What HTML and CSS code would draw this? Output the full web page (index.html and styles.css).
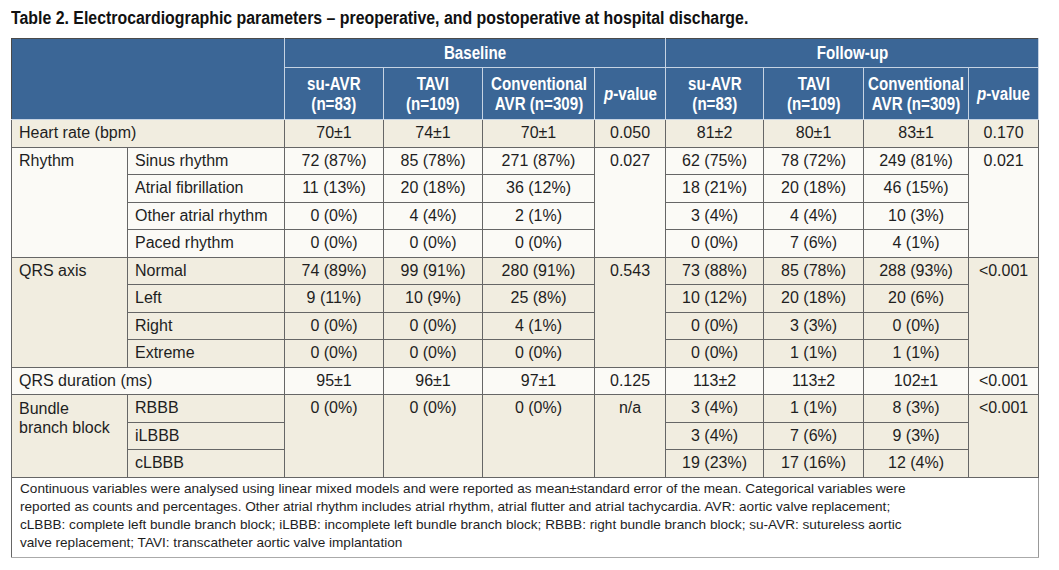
FILE: index.html
```html
<!DOCTYPE html>
<html lang="en">
<head>
<meta charset="utf-8">
<title>Table 2</title>
<link rel="stylesheet" href="styles.css">
</head>
<body>
<div class="page">
  <h1 class="title"><span class="title-text">Table 2. Electrocardiographic parameters – preoperative, and postoperative at hospital discharge.</span></h1>
  <table class="ecg">
    <colgroup>
      <col class="c-lab"><col class="c-sub">
      <col class="c-su"><col class="c-tavi"><col class="c-conv"><col class="c-p">
      <col class="c-su2"><col class="c-tavi2"><col class="c-conv2"><col class="c-p2">
    </colgroup>
    <thead>
      <tr class="h1">
        <th colspan="2" rowspan="2"></th>
        <th colspan="4"><div class="hc"><span class="sq">Baseline</span></div></th>
        <th colspan="4"><div class="hc"><span class="sq">Follow-up</span></div></th>
      </tr>
      <tr class="h2">
        <th><div class="hc"><span class="sq">su-AVR<br>(n=83)</span></div></th>
        <th><div class="hc"><span class="sq">TAVI<br>(n=109)</span></div></th>
        <th><div class="hc"><span class="sq">Conventional<br>AVR (n=309)</span></div></th>
        <th><div class="hc"><span class="sq"><i>p</i>-value</span></div></th>
        <th><div class="hc"><span class="sq">su-AVR<br>(n=83)</span></div></th>
        <th><div class="hc"><span class="sq">TAVI<br>(n=109)</span></div></th>
        <th><div class="hc"><span class="sq">Conventional<br>AVR (n=309)</span></div></th>
        <th><div class="hc"><span class="sq"><i>p</i>-value</span></div></th>
      </tr>
    </thead>
    <tbody class="beige">
      <tr>
        <td colspan="2" class="lab">Heart rate (bpm)</td>
        <td>70±1</td><td>74±1</td><td>70±1</td><td>0.050</td>
        <td>81±2</td><td>80±1</td><td>83±1</td><td>0.170</td>
      </tr>
    </tbody>
    <tbody class="white">
      <tr>
        <td rowspan="4" class="lab top">Rhythm</td>
        <td class="lab">Sinus rhythm</td>
        <td>72 (87%)</td><td>85 (78%)</td><td>271 (87%)</td><td rowspan="4" class="top">0.027</td>
        <td>62 (75%)</td><td>78 (72%)</td><td>249 (81%)</td><td rowspan="4" class="top">0.021</td>
      </tr>
      <tr>
        <td class="lab">Atrial fibrillation</td>
        <td>11 (13%)</td><td>20 (18%)</td><td>36 (12%)</td>
        <td>18 (21%)</td><td>20 (18%)</td><td>46 (15%)</td>
      </tr>
      <tr>
        <td class="lab">Other atrial rhythm</td>
        <td>0 (0%)</td><td>4 (4%)</td><td>2 (1%)</td>
        <td>3 (4%)</td><td>4 (4%)</td><td>10 (3%)</td>
      </tr>
      <tr>
        <td class="lab">Paced rhythm</td>
        <td>0 (0%)</td><td>0 (0%)</td><td>0 (0%)</td>
        <td>0 (0%)</td><td>7 (6%)</td><td>4 (1%)</td>
      </tr>
    </tbody>
    <tbody class="beige">
      <tr>
        <td rowspan="4" class="lab top">QRS axis</td>
        <td class="lab">Normal</td>
        <td>74 (89%)</td><td>99 (91%)</td><td>280 (91%)</td><td rowspan="4" class="top">0.543</td>
        <td>73 (88%)</td><td>85 (78%)</td><td>288 (93%)</td><td rowspan="4" class="top">&lt;0.001</td>
      </tr>
      <tr>
        <td class="lab">Left</td>
        <td>9 (11%)</td><td>10 (9%)</td><td>25 (8%)</td>
        <td>10 (12%)</td><td>20 (18%)</td><td>20 (6%)</td>
      </tr>
      <tr>
        <td class="lab">Right</td>
        <td>0 (0%)</td><td>0 (0%)</td><td>4 (1%)</td>
        <td>0 (0%)</td><td>3 (3%)</td><td>0 (0%)</td>
      </tr>
      <tr>
        <td class="lab">Extreme</td>
        <td>0 (0%)</td><td>0 (0%)</td><td>0 (0%)</td>
        <td>0 (0%)</td><td>1 (1%)</td><td>1 (1%)</td>
      </tr>
    </tbody>
    <tbody class="white">
      <tr>
        <td colspan="2" class="lab">QRS duration (ms)</td>
        <td>95±1</td><td>96±1</td><td>97±1</td><td>0.125</td>
        <td>113±2</td><td>113±2</td><td>102±1</td><td>&lt;0.001</td>
      </tr>
    </tbody>
    <tbody class="beige">
      <tr>
        <td rowspan="3" class="lab top wrap">Bundle<br>branch block</td>
        <td class="lab">RBBB</td>
        <td rowspan="3" class="top">0 (0%)</td><td rowspan="3" class="top">0 (0%)</td><td rowspan="3" class="top">0 (0%)</td><td rowspan="3" class="top">n/a</td>
        <td>3 (4%)</td><td>1 (1%)</td><td>8 (3%)</td><td rowspan="3" class="top">&lt;0.001</td>
      </tr>
      <tr>
        <td class="lab">iLBBB</td>
        <td>3 (4%)</td><td>7 (6%)</td><td>9 (3%)</td>
      </tr>
      <tr>
        <td class="lab">cLBBB</td>
        <td>19 (23%)</td><td>17 (16%)</td><td>12 (4%)</td>
      </tr>
    </tbody>
    <tfoot>
      <tr>
        <td colspan="10" class="note">Continuous variables were analysed using linear mixed models and were reported as mean±standard error of the mean. Categorical variables were<br>reported as counts and percentages. Other atrial rhythm includes atrial rhythm, atrial flutter and atrial tachycardia. AVR: aortic valve replacement;<br>cLBBB: complete left bundle branch block; iLBBB: incomplete left bundle branch block; RBBB: right bundle branch block; su-AVR: sutureless aortic<br>valve replacement; TAVI: transcatheter aortic valve implantation</td>
      </tr>
    </tfoot>
  </table>
</div>
</body>
</html>
```

FILE: styles.css
```css
html, body {
  margin: 0;
  padding: 0;
  background: #ffffff;
}

.page {
  padding: 7px 21px 0 11px;
  font-family: "Liberation Sans", Arial, sans-serif;
  color: #1e1e1e;
}

.title {
  margin: 0 0 8px 0;
  font-family: "Liberation Sans", Arial, sans-serif;
  font-weight: bold;
  font-size: 18px;
  line-height: 23px;
  color: #111;
  white-space: nowrap;
}

.title-text {
  display: inline-block;
  transform: scaleX(0.882);
  transform-origin: left center;
}

.ecg {
  width: 1027px;
  border-collapse: collapse;
  table-layout: fixed;
  font-size: 16px;
  border-left: 1px solid #777;
  border-right: 1px solid #999;
}

.c-lab { width: 116px; }
.c-sub { width: 157px; }
.c-su { width: 99px; }
.c-tavi { width: 99px; }
.c-conv { width: 112px; }
.c-p { width: 71px; }
.c-su2 { width: 98px; }
.c-tavi2 { width: 100px; }
.c-conv2 { width: 105px; }
.c-p2 { width: 70px; }

.ecg th {
  background: #3b6696;
  color: #ffffff;
  font-family: "Liberation Sans", Arial, sans-serif;
  font-weight: bold;
  font-size: 18px;
  line-height: 20px;
  border: 1px solid #c6d3e3;
  padding: 0;
  text-align: center;
  vertical-align: middle;
  white-space: nowrap;
}

.hc {
  display: flex;
  justify-content: center;
}

.sq {
  display: block;
  transform: scaleX(0.84);
  transform-origin: center;
  text-align: center;
  white-space: nowrap;
}

.ecg thead tr.h1 th {
  height: 28px;
  border-top: 1px solid #4a4a4a;
}

.ecg thead tr.h2 th {
  height: 51px;
}

.ecg thead tr th:first-child {
  border-left: 1px solid #4a4a4a;
}

.ecg td {
  border: 1px solid #666;
  height: 26.5px;
  padding: 0 4px;
  text-align: center;
  vertical-align: middle;
  line-height: 18px;
  white-space: nowrap;
}

.ecg td.lab {
  text-align: left;
  padding-left: 7px;
}

.ecg td.top {
  vertical-align: top;
  padding-top: 4px;
}

.ecg td.wrap {
  white-space: normal;
  line-height: 19px;
  padding-top: 4px;
}

.beige td {
  background: #f1ede0;
}

.white td {
  background: #fbfaf6;
}

.ecg tfoot td.note {
  background: #ffffff;
  text-align: left;
  white-space: nowrap;
  font-size: 13.6px;
  line-height: 18px;
  padding: 2px 8px 5px 8px;
  border-bottom: 1px solid #aaa;
  border-right: 1px solid #999;
  color: #1e1e1e;
}
```
